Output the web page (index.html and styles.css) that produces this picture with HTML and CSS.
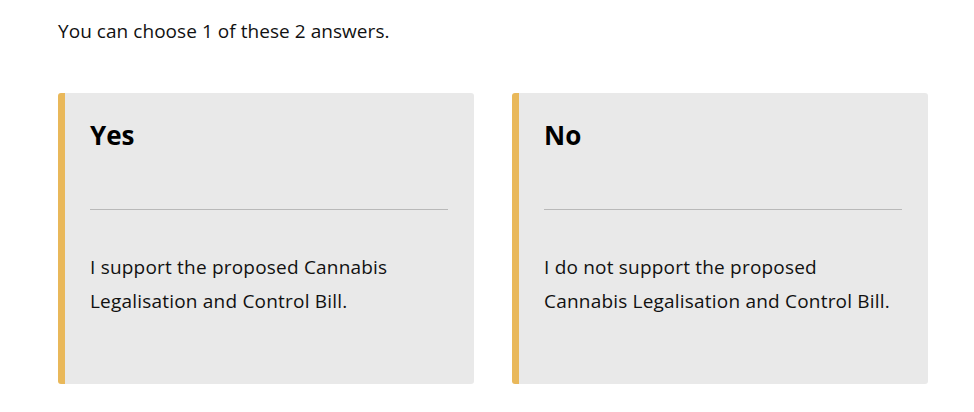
FILE: index.html
```html
<!DOCTYPE html>
<html lang="en">
<head>
  <meta charset="UTF-8">
  <meta name="viewport" content="width=device-width, initial-scale=1.0">
  <title>Choose an answer</title>
  <link rel="stylesheet" href="styles.css">
</head>
<body>
  <div class="question">
    <p class="hint">You can choose 1 of these 2 answers.</p>

    <div class="answers">
      <div class="answer">
        <h2 class="answer-title">Yes</h2>
        <hr class="answer-rule">
        <p class="answer-text">I support the proposed Cannabis Legalisation and Control Bill.</p>
      </div>
      <div class="answer">
        <h2 class="answer-title">No</h2>
        <hr class="answer-rule">
        <p class="answer-text">I do not support the proposed Cannabis Legalisation and Control Bill.</p>
      </div>
    </div>
  </div>
</body>
</html>
```

FILE: styles.css
```css
body {
  font-family: "Open Sans", Arial, sans-serif;
  margin: 0;
  padding: 0;
  background-color: #fff;
  color: #111;
}

.question {
  padding: 19px 46px 0 58px;
}

.hint {
  margin: 0;
  font-size: 19px;
  line-height: 24px;
  letter-spacing: 0.05px;
}

.answers {
  display: grid;
  grid-template-columns: 416px 416px;
  gap: 38px;
  margin-top: 50px;
}

.answer {
  height: 291px;
  box-sizing: border-box;
  background-color: #e9e9e9;
  border-left: 7px solid #e9b85a;
  border-radius: 3px;
  padding: 25px 26px 0 25px;
}

.answer-title {
  margin: 0;
  font-size: 26px;
  line-height: 34px;
  font-weight: 700;
  color: #000;
}

.answer-rule {
  margin: 57px 0 0;
  border: 0;
  border-top: 1px solid #b9b9b9;
}

.answer-text {
  max-width: 352px;
  margin: 40px 0 0;
  font-size: 19px;
  line-height: 34px;
  letter-spacing: 0.2px;
}
```
